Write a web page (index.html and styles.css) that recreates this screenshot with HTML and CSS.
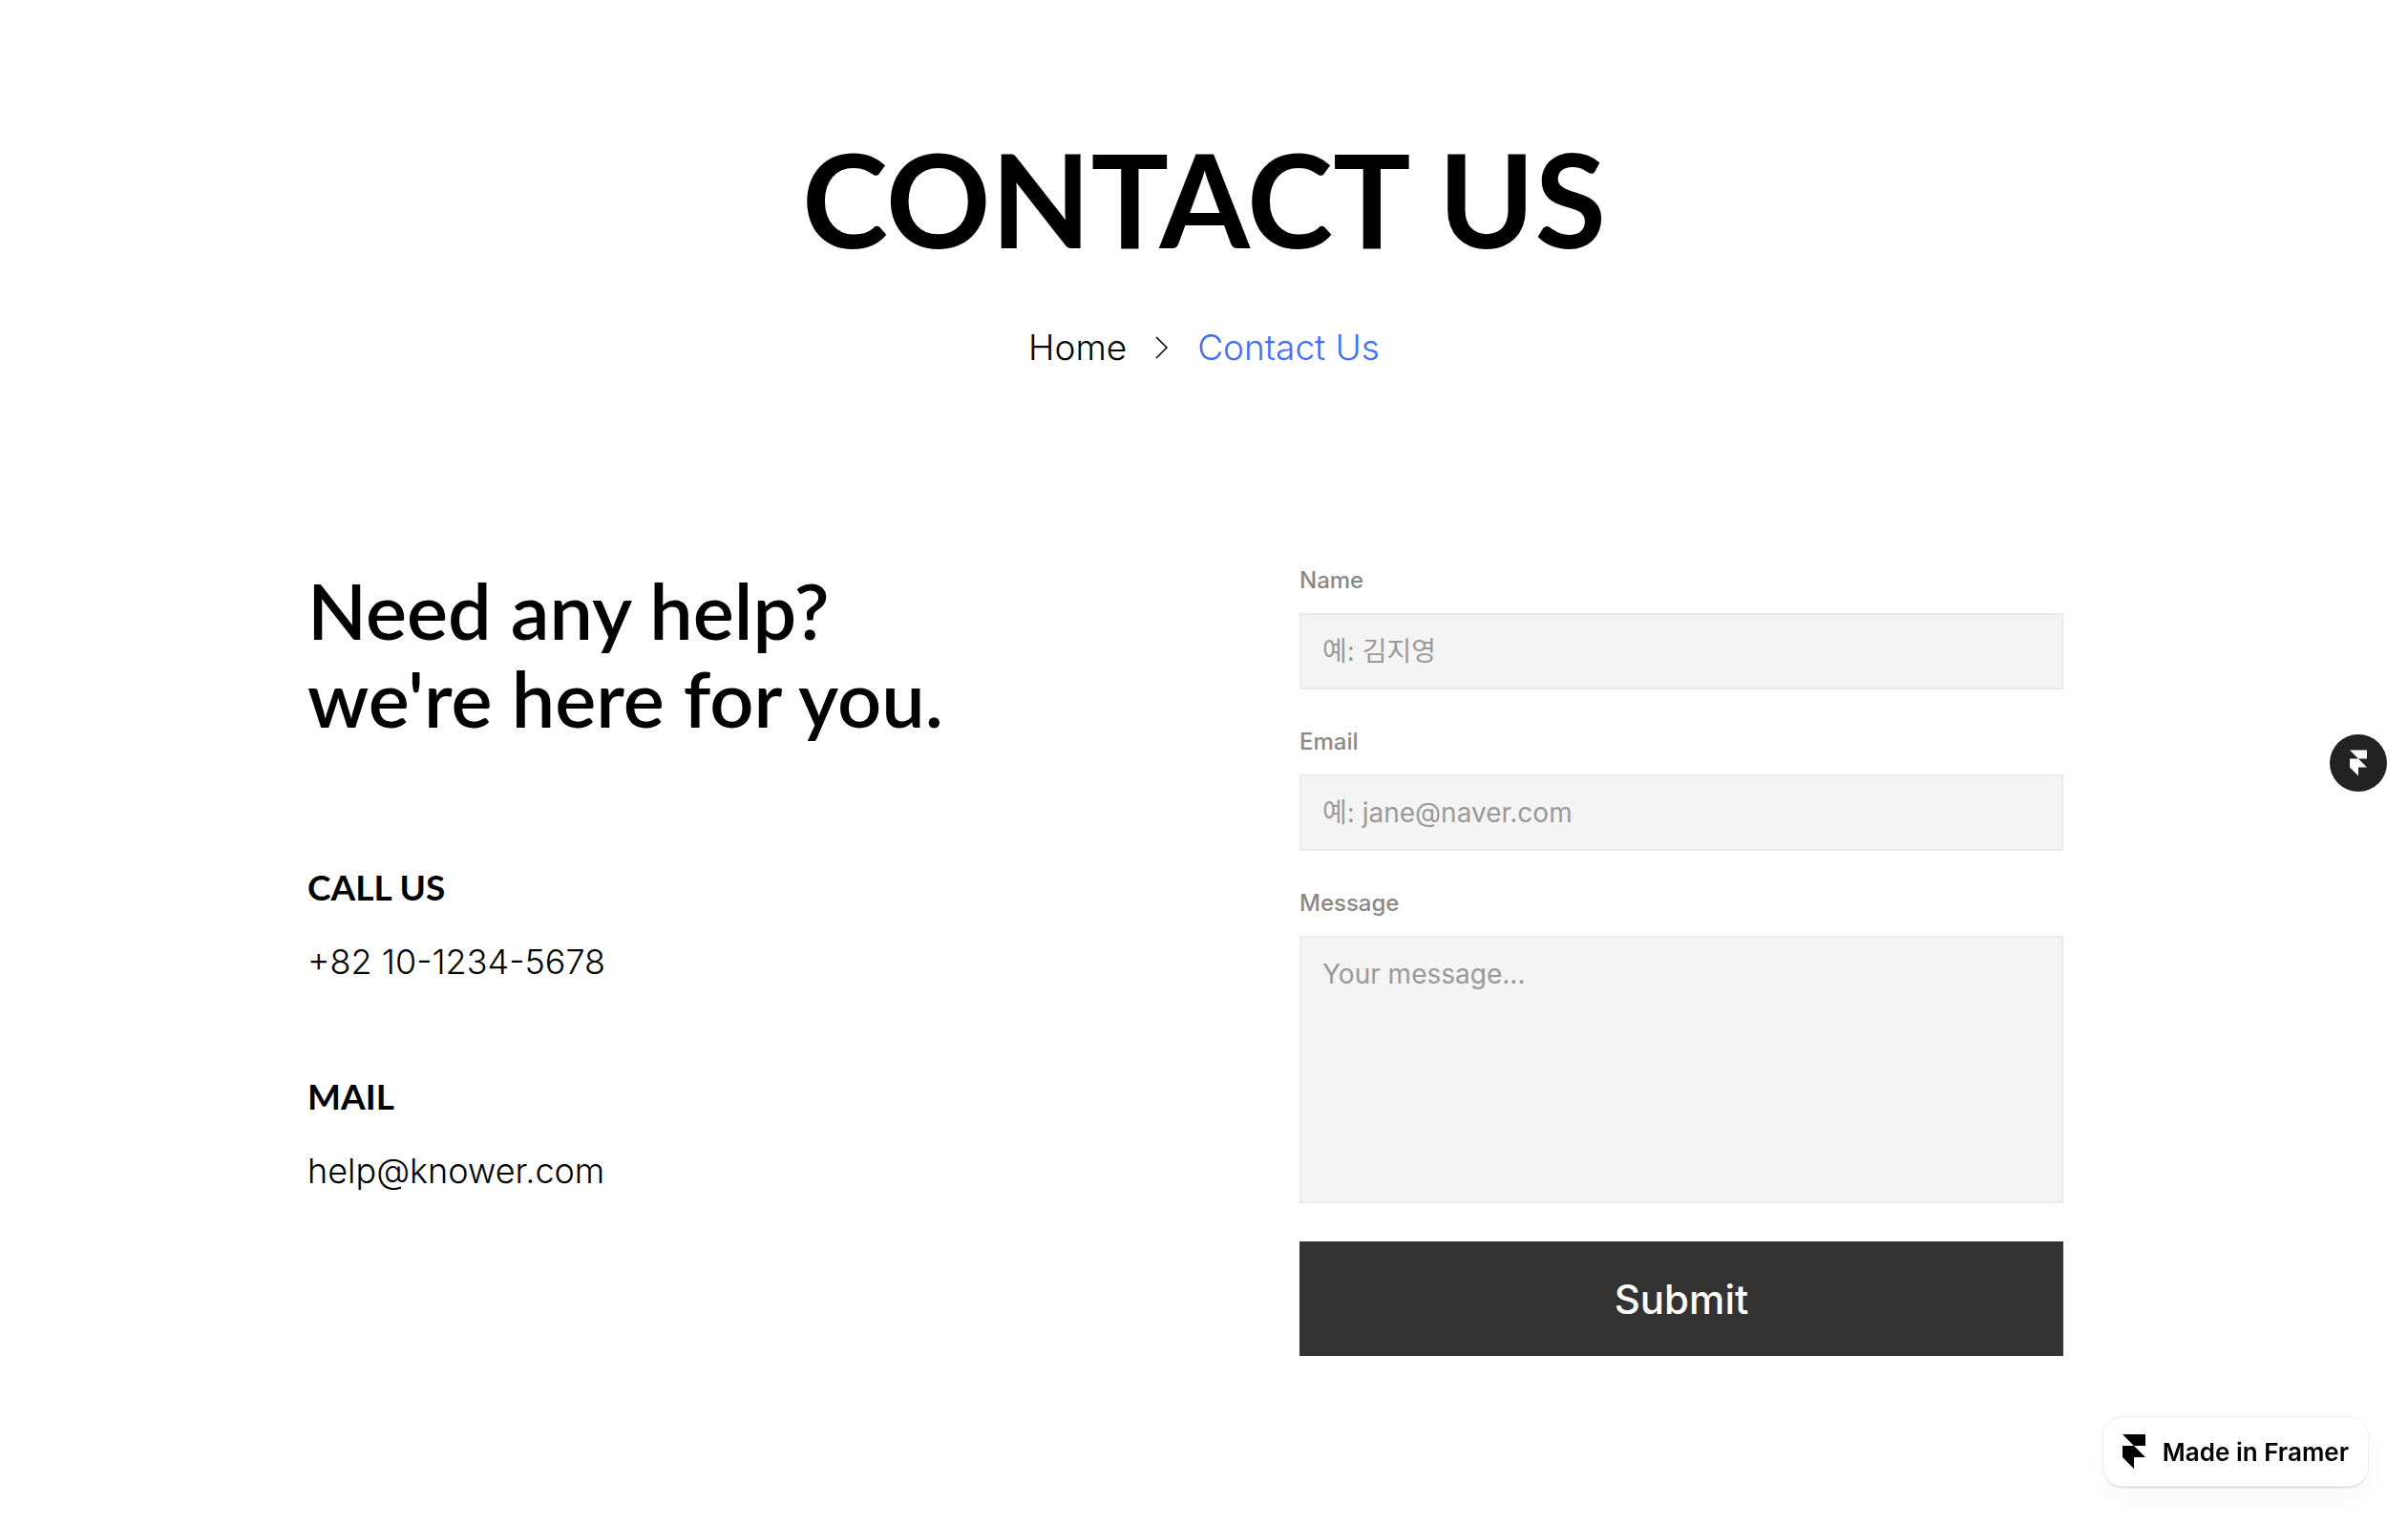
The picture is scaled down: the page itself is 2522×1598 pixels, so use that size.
FILE: index.html
```html
<!DOCTYPE html>
<html lang="ko">
<head>
<meta charset="utf-8">
<meta name="viewport" content="width=device-width, initial-scale=1">
<title>Contact Us</title>
<link rel="stylesheet" href="styles.css">
</head>
<body>
<header class="hero">
  <h1 class="hero-title">CONTACT US</h1>
  <nav class="breadcrumb" aria-label="Breadcrumb">
    <a href="#home">Home</a>
    <svg class="chevron" viewBox="0 0 14 24" aria-hidden="true"><path d="M1 1 12 12 1 23" fill="none" stroke="#000" stroke-width="1.5"/></svg>
    <a class="current" href="#contact" aria-current="page">Contact Us</a>
  </nav>
</header>
<main class="contact">
  <section class="info">
    <h2 class="info-title">Need any help?<br>we're here for you.</h2>
    <div class="info-item">
      <h3 class="info-label">CALL US</h3>
      <a class="info-value" href="tel:+821012345678">+82 10-1234-5678</a>
    </div>
    <div class="info-item">
      <h3 class="info-label">MAIL</h3>
      <a class="info-value" href="mailto:help@knower.com">help@knower.com</a>
    </div>
  </section>
  <form class="form">
    <div class="field">
      <label for="name">Name</label>
      <input id="name" type="text" placeholder="예: 김지영">
    </div>
    <div class="field">
      <label for="email">Email</label>
      <input id="email" type="email" placeholder="예: jane@naver.com">
    </div>
    <div class="field">
      <label for="message">Message</label>
      <textarea id="message" placeholder="Your message..."></textarea>
    </div>
    <button class="submit" type="submit">Submit</button>
  </form>
</main>
<button class="edit-button" type="button" aria-label="Edit in Framer">
  <svg viewBox="0 0 24 36" aria-hidden="true"><path d="M0 0H24V12H12ZM0 12H12L24 24H12V36L0 24Z" fill="#fff"/></svg>
</button>
<a class="badge" href="#framer">
  <svg viewBox="0 0 24 36" aria-hidden="true"><path d="M0 0H24V12H12ZM0 12H12L24 24H12V36L0 24Z" fill="#000"/></svg>
  <span>Made in Framer</span>
</a>
</body>
</html>
```
FILE: styles.css
```css
* { box-sizing: border-box; }

body {
  margin: 0;
  background: #fff;
  color: #000;
  font-family: Inter, "Noto Sans CJK KR", sans-serif;
}

h1, h2, h3 { margin: 0; }
a { color: inherit; text-decoration: none; }

.hero {
  display: flex;
  flex-direction: column;
  align-items: center;
  gap: 52px;
  padding: 128px 40px 0;
}

.hero-title {
  font-family: Lato, sans-serif;
  font-weight: 700;
  font-size: 136px;
  line-height: 160px;
}

.breadcrumb {
  display: flex;
  align-items: center;
  gap: 30px;
  font-size: 37px;
  line-height: 48px;
  font-weight: 300;
}

.chevron { width: 14px; height: 24px; }
.current { color: #4070f4; }

.contact {
  display: grid;
  grid-template-columns: 1fr 1fr;
  gap: 200px;
  padding: 205px 322px 120px;
}

.info {
  display: flex;
  flex-direction: column;
  gap: 93px;
}

.info-title {
  margin-bottom: 35px;
  font-family: Lato, sans-serif;
  font-weight: 600;
  font-size: 81px;
  line-height: 92px;
}

.info-item {
  display: flex;
  flex-direction: column;
  align-items: flex-start;
  gap: 30px;
}

.info-label {
  font-family: Lato, sans-serif;
  font-weight: 700;
  font-size: 37px;
  line-height: 48px;
}

.info-value {
  font-size: 36px;
  line-height: 48px;
  font-weight: 300;
}

.form {
  display: flex;
  flex-direction: column;
  gap: 40px;
  max-width: 800px;
}

.field {
  display: flex;
  flex-direction: column;
  gap: 20px;
}

.field label {
  color: #888;
  font-size: 24px;
  line-height: 29px;
  font-weight: 500;
}

.field input,
.field textarea {
  width: 100%;
  margin: 0;
  padding: 22px;
  border: 2px solid #eaeaea;
  border-radius: 0;
  background: #f4f4f4;
  color: #333;
  font: inherit;
  font-size: 28px;
  line-height: 32px;
}

.field input { height: 80px; }
.field textarea { display: block; height: 280px; resize: none; }

::placeholder { color: #999; opacity: 1; }

.submit {
  height: 120px;
  border: 0;
  background: #333;
  color: #fff;
  font: inherit;
  font-size: 42px;
  font-weight: 500;
}

.edit-button {
  position: fixed;
  top: calc(50% - 30px);
  right: 22px;
  display: flex;
  align-items: center;
  justify-content: center;
  width: 60px;
  height: 60px;
  padding: 0;
  border: 0;
  border-radius: 50%;
  background: #222;
}

.edit-button svg { width: 18px; height: 28px; }

.badge {
  position: fixed;
  right: 42px;
  bottom: 42px;
  display: flex;
  align-items: center;
  gap: 18px;
  height: 72px;
  padding: 0 20px;
  border-radius: 20px;
  background: #fff;
  box-shadow: 0 0 0 1px #eee, 0 2px 2px rgba(0, 0, 0, .14), 0 12px 24px rgba(0, 0, 0, .03);
  font-size: 26px;
  font-weight: 600;
}

.badge svg { width: 24px; height: 36px; }
```
